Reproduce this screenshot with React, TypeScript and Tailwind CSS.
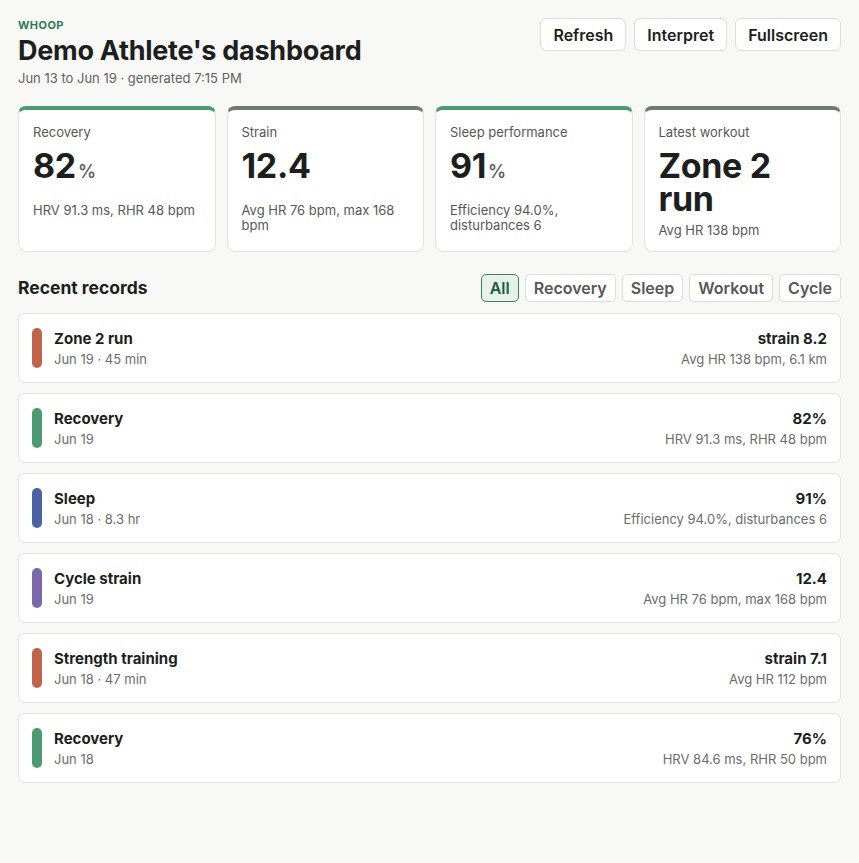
import React from "react";

const cards = [
  { label: "Recovery", value: "82", unit: "%", sub: "HRV 91.3 ms, RHR 48 bpm", top: "border-t-[#4b9a72]" },
  { label: "Strain", value: "12.4", unit: "", sub: "Avg HR 76 bpm, max 168 bpm", top: "border-t-[#6e7a72]" },
  { label: "Sleep performance", value: "91", unit: "%", sub: "Efficiency 94.0%, disturbances 6", top: "border-t-[#4b9a72]" },
  { label: "Latest workout", value: "Zone 2 run", unit: "", sub: "Avg HR 138 bpm", top: "border-t-[#6e7a72]" },
];

const records = [
  { title: "Zone 2 run", sub: "Jun 19 · 45 min", value: "strain 8.2", detail: "Avg HR 138 bpm, 6.1 km", bar: "bg-[#c0644c]" },
  { title: "Recovery", sub: "Jun 19", value: "82%", detail: "HRV 91.3 ms, RHR 48 bpm", bar: "bg-[#4b9a72]" },
  { title: "Sleep", sub: "Jun 18 · 8.3 hr", value: "91%", detail: "Efficiency 94.0%, disturbances 6", bar: "bg-[#4a63a6]" },
  { title: "Cycle strain", sub: "Jun 19", value: "12.4", detail: "Avg HR 76 bpm, max 168 bpm", bar: "bg-[#7a68a8]" },
  { title: "Strength training", sub: "Jun 18 · 47 min", value: "strain 7.1", detail: "Avg HR 112 bpm", bar: "bg-[#c0644c]" },
  { title: "Recovery", sub: "Jun 18", value: "76%", detail: "HRV 84.6 ms, RHR 50 bpm", bar: "bg-[#4b9a72]" },
];

const filters = ["All", "Recovery", "Sleep", "Workout", "Cycle"];

export default function App() {
  return (
    <div
      className="min-h-[863px] bg-[#f8f8f6] text-[#1c1f1d] px-[18px] pt-[18px]"
      style={{ fontFamily: "Inter, 'Noto Sans', sans-serif" }}
    >
      <header className="flex items-start justify-between">
        <div>
          <div className="text-[11px] font-bold tracking-[0.04em] text-[#2f7a55] leading-[14px]">WHOOP</div>
          <h1 className="text-[27px] font-bold leading-[32px] mt-[3px] tracking-[-0.01em]">Demo Athlete's dashboard</h1>
          <div className="text-[13px] text-[#5f625f] leading-[18px] mt-[2px]">Jun 13 to Jun 19 · generated 7:15 PM</div>
        </div>
        <div className="flex gap-2">
          {["Refresh", "Interpret", "Fullscreen"].map((b) => (
            <button
              key={b}
              className="h-[33px] px-[12px] rounded-[6px] border border-[#dcdcd8] bg-white text-[16px] font-semibold text-[#1c1f1d]"
            >
              {b}
            </button>
          ))}
        </div>
      </header>

      <section className="grid grid-cols-4 gap-[11px] mt-[19px]">
        {cards.map((c) => (
          <div
            key={c.label}
            className={`bg-white rounded-[8px] border border-[#e3e3df] border-t-4 ${c.top} px-[14px] pt-[13px] pb-[13px]`}
          >
            <div className="text-[13px] leading-[18px] text-[#555855]">{c.label}</div>
            <div className="mt-2 min-h-[46px] text-[34px] font-bold leading-[33px] tracking-[-0.01em]">
              {c.value}
              {c.unit && <span className="text-[18px] font-semibold text-[#5f625f] ml-[2px]">{c.unit}</span>}
            </div>
            <div className="mt-2 text-[13px] leading-[15px] text-[#555855]">{c.sub}</div>
          </div>
        ))}
      </section>

      <section className="mt-[22px]">
        <div className="flex items-center justify-between">
          <h2 className="text-[17.5px] font-bold leading-[24px]">Recent records</h2>
          <div className="flex gap-[6px]">
            {filters.map((f) =>
              f === "All" ? (
                <button
                  key={f}
                  className="h-[28px] px-[8px] rounded-[5px] border border-[#3f7d5a] bg-[#e6f1ea] text-[16px] font-semibold text-[#1f5a3a]"
                >
                  {f}
                </button>
              ) : (
                <button
                  key={f}
                  className="h-[28px] px-[8px] rounded-[5px] border border-[#dcdcd8] bg-white text-[16px] font-semibold text-[#555855]"
                >
                  {f}
                </button>
              )
            )}
          </div>
        </div>

        <div className="mt-[11px] flex flex-col gap-[10px]">
          {records.map((r, i) => (
            <div
              key={i}
              className="h-[70px] bg-white rounded-[7px] border border-[#e3e3df] flex items-center px-[13px]"
            >
              <div className={`w-[10px] h-[40px] rounded-full ${r.bar}`} />
              <div className="ml-[12px] flex-1">
                <div className="text-[15px] font-bold leading-[20px]">{r.title}</div>
                <div className="text-[13px] leading-[18px] text-[#6a6d6a] mt-[1px]">{r.sub}</div>
              </div>
              <div className="text-right">
                <div className="text-[15px] font-bold leading-[20px]">{r.value}</div>
                <div className="text-[13px] leading-[18px] text-[#6a6d6a] mt-[1px]">{r.detail}</div>
              </div>
            </div>
          ))}
        </div>
      </section>
    </div>
  );
}
